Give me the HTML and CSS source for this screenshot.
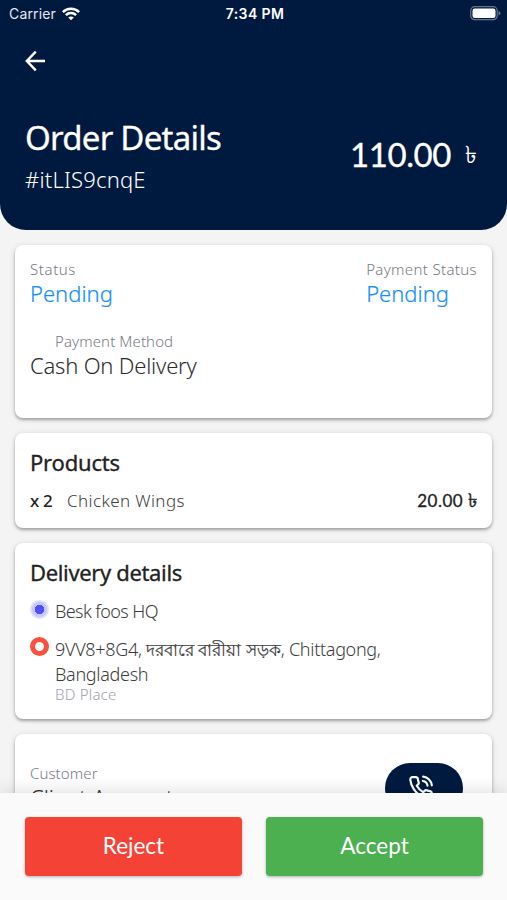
FILE: index.html
```html
<!DOCTYPE html>
<html lang="en">
<head>
<meta charset="utf-8">
<title>Order Details</title>
<link rel="stylesheet" href="styles.css">
</head>
<body>
<div class="app">
  <header class="header">
    <div class="statusbar">
      <div class="carrier"><span>Carrier</span>
        <svg width="18" height="14" viewBox="0 0 18 14" fill="none" stroke="#fff" stroke-width="2.5"><path d="M.9 5.1C5.3.7 12.7.7 17.1 5.1M3.9 8.2c2.8-2.8 7.4-2.8 10.2 0"/><path d="M9 13.3 6.2 10.5c1.6-1.5 4-1.5 5.6 0z" fill="#fff" stroke="none"/></svg>
      </div>
      <div class="clock">7:34 PM</div>
      <div class="battery"><svg width="31" height="15" viewBox="0 0 31 15"><rect x=".7" y=".7" width="26.5" height="13" rx="4" fill="none" stroke="#66758f" stroke-width="1.2"/><rect x="2.5" y="2.5" width="23" height="9.5" rx="2.2" fill="#fff"/><path d="M28.5 5v4.500q2-.7 2-2.200t-2-2.300z" fill="#66758f"/></svg></div>
    </div>
    <svg class="back" width="22" height="22" viewBox="0 0 22 22" fill="none" stroke="#fff" stroke-width="2.4"><path d="M21 11H3M11.800 1.600 2.800 11l9 9.400"/></svg>
    <div class="summary">
      <div>
        <h1 class="title">Order Details</h1>
        <div class="order-id">#itLIS9cnqE</div>
      </div>
      <div class="total"><span class="amount">110.00</span><span class="taka">৳</span></div>
    </div>
  </header>
  <main class="content">
    <section class="card status-card">
      <div class="row">
        <div><div class="label l-status">Status</div><div class="value pending">Pending</div></div>
        <div><div class="label l-pstatus">Payment Status</div><div class="value pending">Pending</div></div>
      </div>
      <div class="method"><div class="label indent">Payment Method</div><div class="value cash">Cash On Delivery</div></div>
    </section>
    <section class="card products-card">
      <h2 class="heading h-products">Products</h2>
      <div class="row item"><div class="item-name"><b class="qty">x 2</b><span class="wings">Chicken Wings</span></div><div class="price">20.00 <span class="taka-small">৳</span></div></div>
    </section>
    <section class="card delivery-card">
      <h2 class="heading h-delivery">Delivery details</h2>
      <div class="place first"><span class="dot"></span><div class="hq">Besk foos HQ</div></div>
      <div class="place"><span class="ring"></span><div><div class="address">9VV8+8G4, <span class="bn">দরবারে বারীয়া সড়ক</span>, Chittagong,</div><div class="bangladesh">Bangladesh</div><div class="kind">BD Place</div></div></div>
    </section>
    <section class="card customer-card">
      <div><div class="label">Customer</div><div class="value client">Client Account</div></div>
      <div class="call"><svg width="26" height="26" viewBox="0 0 24 24" fill="none" stroke="#fff" stroke-width="2" stroke-linecap="round" stroke-linejoin="round"><path d="M22 16.920v3a2 2 0 0 1-2.180 2 19.800 19.800 0 0 1-8.630-3.070 19.500 19.500 0 0 1-6-6A19.800 19.800 0 0 1 2.120 4.180 2 2 0 0 1 4.110 2h3a2 2 0 0 1 2 1.720c.13.960.36 1.900.7 2.810a2 2 0 0 1-.45 2.110L8.090 9.910a16 16 0 0 0 6 6l1.270-1.270a2 2 0 0 1 2.110-.45c.91.34 1.850.57 2.810.7A2 2 0 0 1 22 16.920z"/><path d="M14 1.500a9 9 0 0 1 8 8M13.700 5.500a5 5 0 0 1 4.300 4.300"/></svg></div>
    </section>
  </main>
  <footer class="actions">
    <button class="btn reject">Reject</button>
    <button class="btn accept">Accept</button>
  </footer>
</div>
</body>
</html>
```
FILE: styles.css
```css
* { box-sizing: border-box; }
body { margin: 0; background: #f4f4f5; font-family: "Noto Sans", "Open Sans", sans-serif; font-weight: 300; }
.app { width: 507px; height: 900px; overflow: hidden; display: flex; flex-direction: column; }
.header { flex: none; height: 230px; background: #001a3f; color: #fff; border-radius: 0 0 26px 26px; }
.statusbar { height: 27px; display: grid; grid-template-columns: 1fr auto 1fr; align-items: center; padding: 0 6px 0 9px; font-family: Inter, sans-serif; font-size: 14px; font-weight: 400; }
.carrier { display: flex; align-items: center; gap: 6px; color: #e4e8ee; letter-spacing: .15px; }
.clock { font-weight: 600; letter-spacing: .4px; }
.battery { display: flex; justify-content: flex-end; }
.back { display: block; margin: 23px 0 0 24px; }
.summary { display: flex; justify-content: space-between; padding: 44px 30px 0 25px; }
.title { margin: 0; font-size: 33px; line-height: 44px; font-weight: 400; letter-spacing: -.75px; -webkit-text-stroke: .3px #fff; white-space: nowrap; }
.order-id { font-size: 22px; line-height: 30px; margin-top: 4px; letter-spacing: .2px; }
.total { display: flex; align-items: center; height: 76px; gap: 14px; font-family: Lato, sans-serif; }
.amount { font-size: 33px; font-weight: 400; letter-spacing: -.4px; -webkit-text-stroke: .3px #fff; }
.taka { font-size: 24px; line-height: 30px; }
.content { flex: 1; min-height: 0; overflow: hidden; padding: 15px 15px 0; display: flex; flex-direction: column; gap: 15px; }
.card { flex: none; background: #fff; border-radius: 8px; box-shadow: 0 2px 3px rgba(0,0,0,.28), 0 1px 6px rgba(0,0,0,.12); padding: 0 15px; white-space: nowrap; }
.status-card { height: 173px; padding-top: 14px; }
.row { display: flex; justify-content: space-between; }
.label { font-size: 15px; line-height: 20px; color: #777b84; font-weight: 300; letter-spacing: .1px; }
.l-status { letter-spacing: .6px; }
.l-pstatus { letter-spacing: .35px; }
.value { font-size: 22px; line-height: 28px; color: #2c2c2c; }
.value.pending { color: #1690f6; -webkit-text-stroke: .2px #1690f6; }
.cash { letter-spacing: -.2px; }
.method { margin-top: 24px; }
.indent { padding-left: 25px; }
.products-card { height: 95px; padding-top: 14px; }
.heading { margin: 0; font-size: 22px; line-height: 30px; font-weight: 400; color: #222; -webkit-text-stroke: .3px #222; }
.h-products { letter-spacing: -.2px; }
.h-delivery { letter-spacing: -.35px; }
.item { margin-top: 12px; font-size: 17px; line-height: 24px; color: #3c3c3c; }
.item-name { display: flex; gap: 14px; }
.qty { font-weight: 500; color: #222; width: 23px; letter-spacing: -.3px; }
.wings { letter-spacing: .4px; }
.price { font-family: Lato, sans-serif; font-weight: 400; color: #222; letter-spacing: .5px; -webkit-text-stroke: .3px #222; }
.taka-small { font-size: 19px; line-height: 20px; letter-spacing: 0; -webkit-text-stroke: .4px #222; }
.delivery-card { height: 176px; padding-top: 14px; }
.place { display: flex; gap: 6px; font-size: 18px; line-height: 24px; color: #3c3c3c; margin-top: 14px; }
.place.first { margin-top: 12px; }
.hq { letter-spacing: -.6px; }
.address { letter-spacing: -.3px; }
.bn { font-size: 16.600px; letter-spacing: 0; -webkit-text-stroke: .2px #444; }
.bangladesh { letter-spacing: -.3px; }
.dot { flex: none; width: 19px; height: 19px; margin-top: 1px; border-radius: 50%; background: radial-gradient(circle, #5250f7 0 4.500px, #c6c7fc 5px 7px, #dedffd 8px); }
.ring { flex: none; width: 19px; height: 19px; border: 5px solid #f9503f; border-radius: 50%; }
.kind { font-size: 15px; line-height: 17px; color: #a0a3aa; letter-spacing: .2px; }
.customer-card { height: 130px; padding-top: 29px; display: flex; justify-content: space-between; }
.call { width: 78px; height: 50px; border-radius: 25px; margin-right: 14px; background: #001a3f; display: flex; justify-content: center; padding: 12px 6px 0 0; }
.actions { flex: none; position: relative; height: 107px; background: #fafafa; box-shadow: 0 0 18px rgba(0,0,0,.15); padding: 24px 24px 0 25px; display: flex; gap: 24px; }
.btn { flex: 1; height: 59px; border: 0; padding: 0 0 2px; border-radius: 4px; color: #fff; font-family: Lato, sans-serif; font-size: 22.500px; box-shadow: 0 1px 3px rgba(0,0,0,.3); }
.reject { background: #f44336; }
.accept { background: #4caf50; }
```
